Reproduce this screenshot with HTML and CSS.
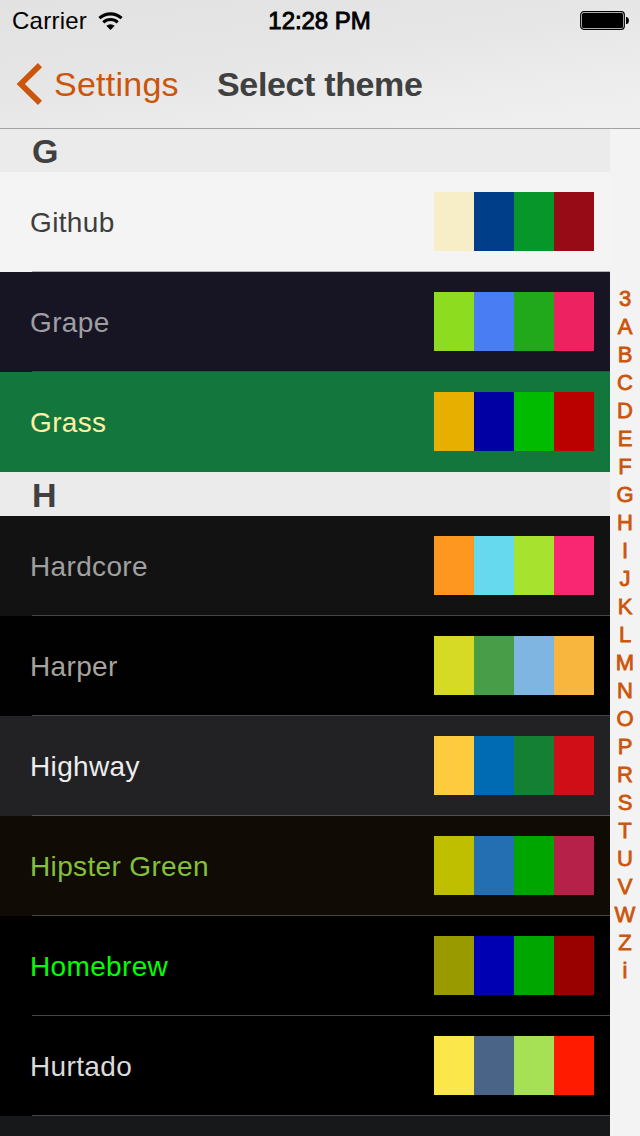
FILE: index.html
```html
<!DOCTYPE html>
<html lang="en">
<head>
<meta charset="utf-8">
<title>Select theme</title>
<link rel="stylesheet" href="styles.css">
</head>
<body>
<div class="screen">
  <header class="navbar">
    <div class="status">
      <div class="carrier"><span class="carrier-name">Carrier</span>
        <svg class="wifi" width="26" height="20" viewBox="0 0 26 20" fill="none" stroke="#000" stroke-width="3.100">
          <path d="M1.400 7.200A16.500 16.500 0 0 1 23.600 7.200"/>
          <path d="M5.300 11.400A10.500 10.500 0 0 1 19.700 11.400"/>
          <path d="M8.300 14.800Q12.500 11.600 16.700 14.800L12.500 19Z" fill="#000" stroke="none"/>
        </svg>
      </div>
      <div class="time">12:28 PM</div>
      <svg class="battery" width="50" height="20" viewBox="0 0 50 20">
        <rect x=".7" y=".7" width="43.6" height="17.6" rx="3" fill="none" stroke="#000" stroke-width="1.2"/>
        <rect x="2" y="2" width="41" height="15" rx="1.5"/>
        <path d="M46 6h1q2 1 2 3.500t-2 3.500h-1z"/>
      </svg>
    </div>
    <div class="bar">
      <div class="back">
        <svg class="chevron" width="27" height="44" viewBox="0 0 27 44"><path d="M25 3.100 5.800 22 25 40.900" fill="none" stroke="#cb550a" stroke-width="5.800"/></svg>
        <span class="back-label">Settings</span>
      </div>
      <h1 class="title">Select theme</h1>
    </div>
  </header>
  <main class="content">
    <div class="list">
      <h2 class="section first">G</h2>
      <div class="row github"><span class="name">Github</span><div class="swatch"><i></i><i></i><i></i><i></i></div></div>
      <div class="row grape"><span class="name">Grape</span><div class="swatch"><i></i><i></i><i></i><i></i></div></div>
      <div class="row grass last"><span class="name">Grass</span><div class="swatch"><i></i><i></i><i></i><i></i></div></div>
      <h2 class="section">H</h2>
      <div class="row hardcore"><span class="name">Hardcore</span><div class="swatch"><i></i><i></i><i></i><i></i></div></div>
      <div class="row harper"><span class="name">Harper</span><div class="swatch"><i></i><i></i><i></i><i></i></div></div>
      <div class="row highway"><span class="name">Highway</span><div class="swatch"><i></i><i></i><i></i><i></i></div></div>
      <div class="row hipster"><span class="name">Hipster Green</span><div class="swatch"><i></i><i></i><i></i><i></i></div></div>
      <div class="row homebrew"><span class="name">Homebrew</span><div class="swatch"><i></i><i></i><i></i><i></i></div></div>
      <div class="row hurtado"><span class="name">Hurtado</span><div class="swatch"><i></i><i></i><i></i><i></i></div></div>
      <div class="row next last"></div>
    </div>
    <nav class="index">
      <span>3</span><span>A</span><span>B</span><span>C</span><span>D</span><span>E</span><span>F</span><span>G</span><span>H</span><span>I</span><span>J</span><span>K</span><span>L</span><span>M</span><span>N</span><span>O</span><span>P</span><span>R</span><span>S</span><span>T</span><span>U</span><span>V</span><span>W</span><span>Z</span><span>i</span>
    </nav>
  </main>
</div>
</body>
</html>
```
FILE: styles.css
```css
* { box-sizing: border-box; }
body { margin: 0; font-family: "Liberation Sans", Arial, sans-serif; background: #f3f3f3; }
.screen { width: 640px; height: 1136px; overflow: hidden; display: flex; flex-direction: column; }
.navbar { height: 129px; flex: none; border-bottom: 1px solid #a2a2a2; background: linear-gradient(172deg, #e2e2e2 0, #e5e5e5 38%, #efefef 88%, #f0f0f0 100%); }
.status { height: 40px; display: grid; grid-template-columns: 1fr auto 1fr; align-items: center; padding: 1px 10px 0 12px; color: #000; }
.carrier { display: flex; align-items: center; }
.carrier-name { font-size: 24px; line-height: 40px; letter-spacing: .25px; width: 86px; white-space: nowrap; }
.wifi { margin-top: -1px; }
.time { font-size: 24px; line-height: 40px; letter-spacing: -.05px; margin-left: -3px; -webkit-text-stroke: .9px #000; }
.battery { justify-self: end; }
.bar { height: 88px; display: flex; align-items: center; padding-left: 15px; }
.back { display: flex; align-items: center; width: 202px; color: #cb550a; }
.back-label { font-size: 34px; line-height: 44px; margin-left: 12px; letter-spacing: .25px; }
.title { margin: 0; font-size: 34px; line-height: 44px; font-weight: 700; letter-spacing: -.35px; color: #404040; white-space: nowrap; }
.content { display: flex; flex: 1; min-height: 0; }
.list { width: 610px; flex: none; }
.section { margin: 0; height: 44px; padding-left: 32px; background: #ebebeb; color: #404040; font-size: 34px; line-height: 46px; font-weight: 700; }
.section.first { height: 43px; line-height: 45px; }
.row { height: 100px; padding: 20px 16px 0 30px; display: flex; justify-content: space-between; background-image: linear-gradient(#444, #444); background-size: 578px 1px; background-position: 32px 99px; background-repeat: no-repeat; }
.row.last { background-image: none; }
.name { font-size: 28px; line-height: 61px; letter-spacing: .35px; }
.swatch { display: grid; grid-template-columns: repeat(4, 40px); height: 59px; }
.index { width: 30px; padding-top: 156px; display: flex; flex-direction: column; color: #cb550a; font-size: 22px; line-height: 28px; text-align: center; -webkit-text-stroke: .8px #cb550a; }
.index span { height: 28px; }

.github { background-color: #f4f4f4; background-image: linear-gradient(#b4b4b4, #b4b4b4); color: #3e3e3e; }
.github i:nth-child(1) { background: #f7eec7; }
.github i:nth-child(2) { background: #003e8a; }
.github i:nth-child(3) { background: #07962a; }
.github i:nth-child(4) { background: #970b16; }
.grape { background-color: #171423; color: #9f9fa1; }
.grape i:nth-child(1) { background: #8ddc20; }
.grape i:nth-child(2) { background: #487df4; }
.grape i:nth-child(3) { background: #22a91b; }
.grape i:nth-child(4) { background: #ed2261; }
.grass { background-color: #13773d; color: #fff0a5; }
.grass i:nth-child(1) { background: #e7b000; }
.grass i:nth-child(2) { background: #0000a3; }
.grass i:nth-child(3) { background: #00bb00; }
.grass i:nth-child(4) { background: #bb0000; }
.hardcore { background-color: #121212; color: #a0a0a0; }
.hardcore i:nth-child(1) { background: #fd971f; }
.hardcore i:nth-child(2) { background: #66d9ef; }
.hardcore i:nth-child(3) { background: #a6e22e; }
.hardcore i:nth-child(4) { background: #f92672; }
.harper { background-color: #010101; color: #a8a49d; }
.harper i:nth-child(1) { background: #d6da25; }
.harper i:nth-child(2) { background: #489e48; }
.harper i:nth-child(3) { background: #7fb5e1; }
.harper i:nth-child(4) { background: #f8b63f; }
.highway { background-color: #222225; color: #ededed; background-image: linear-gradient(#505052, #505052); }
.highway i:nth-child(1) { background: #ffcb3e; }
.highway i:nth-child(2) { background: #006bb3; }
.highway i:nth-child(3) { background: #138034; }
.highway i:nth-child(4) { background: #d00e18; }
.hipster { background-color: #100b05; color: #84c138; }
.hipster i:nth-child(1) { background: #bfbf00; }
.hipster i:nth-child(2) { background: #246eb2; }
.hipster i:nth-child(3) { background: #00a600; }
.hipster i:nth-child(4) { background: #b6214a; }
.homebrew { background-color: #000; color: #00ff00; }
.homebrew i:nth-child(1) { background: #999900; }
.homebrew i:nth-child(2) { background: #0000b2; }
.homebrew i:nth-child(3) { background: #00a600; }
.homebrew i:nth-child(4) { background: #990000; }
.hurtado { background-color: #000; color: #dbdbdb; }
.hurtado i:nth-child(1) { background: #fbe74a; }
.hurtado i:nth-child(2) { background: #496487; }
.hurtado i:nth-child(3) { background: #a5e055; }
.hurtado i:nth-child(4) { background: #ff1b00; }
.next { background-color: #17181a; }
```
